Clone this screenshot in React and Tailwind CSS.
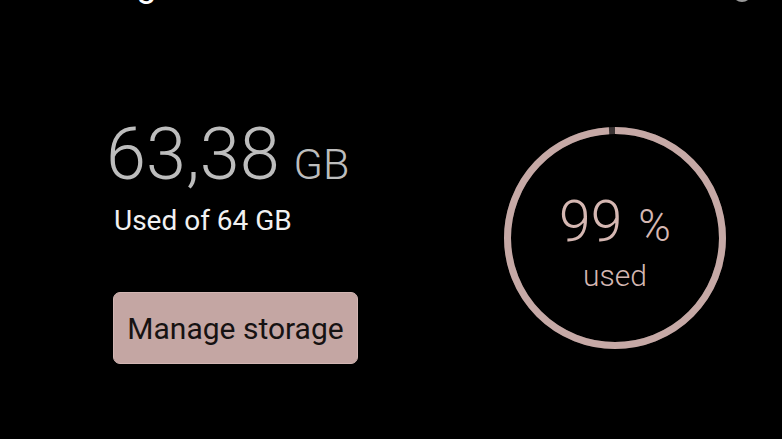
import React from 'react'

const USED = 63.38
const TOTAL = 64

function Ring({ percent }) {
  const r = 107.5
  const c = 2 * Math.PI * r
  const dash = (c * percent) / 100
  return (
    <svg width="222" height="222" viewBox="0 0 222 222" className="absolute inset-0">
      <circle cx="111" cy="111" r={r} fill="none" stroke="#3b3434" strokeWidth="7" />
      <circle
        cx="111"
        cy="111"
        r={r}
        fill="none"
        stroke="#c6a9a6"
        strokeWidth="7"
        strokeDasharray={`${dash} ${c}`}
        transform="rotate(-90 111 111)"
      />
    </svg>
  )
}

export default function App() {
  const percent = Math.floor((USED / TOTAL) * 100)

  return (
    <div className="w-[782px] h-[439px] bg-black overflow-hidden font-['Roboto','Liberation_Sans',sans-serif]">
      {/* header, scrolled mostly out of view */}
      <div className="h-[6px] overflow-hidden flex justify-between pl-[52px] pr-[30px]">
        <h1 className="text-[36px] leading-[36px] mt-[-34px] text-white">Storage</h1>
        <div className="w-[20px] h-[20px] rounded-full border-2 border-[#9a9a9a] mt-[-18px]" />
      </div>

      <div className="flex mt-[113px] pl-[113px]">
        <div className="w-[391px] flex flex-col items-start">
          <div className="flex items-baseline text-[#bdbdbd] ml-[-7px]">
            <span className="text-[72px] leading-none font-light">63,38</span>
            <span className="text-[43px] leading-none font-light ml-[14px]">GB</span>
          </div>
          <p className="mt-[16px] text-[28px] leading-none text-[#f1f1f1] ml-[1px]">Used of 64 GB</p>
          <button className="mt-[57px] w-[245px] h-[72px] rounded-[7px] bg-[#c4a6a3] border border-[#d2b6b3] text-[30px] text-[#161212] flex items-center justify-center">
            Manage storage
          </button>
        </div>

        <div className="relative mt-[8px] w-[222px] h-[222px] flex flex-col items-center text-[#d5b7b2]">
          <Ring percent={percent} />
          <div className="mt-[66px] flex items-baseline">
            <span className="text-[57px] leading-none font-light">{percent}</span>
            <span className="text-[44px] leading-none font-light ml-[16px]">%</span>
          </div>
          <span className="mt-[11px] text-[30px] leading-none font-light">used</span>
        </div>
      </div>
    </div>
  )
}
